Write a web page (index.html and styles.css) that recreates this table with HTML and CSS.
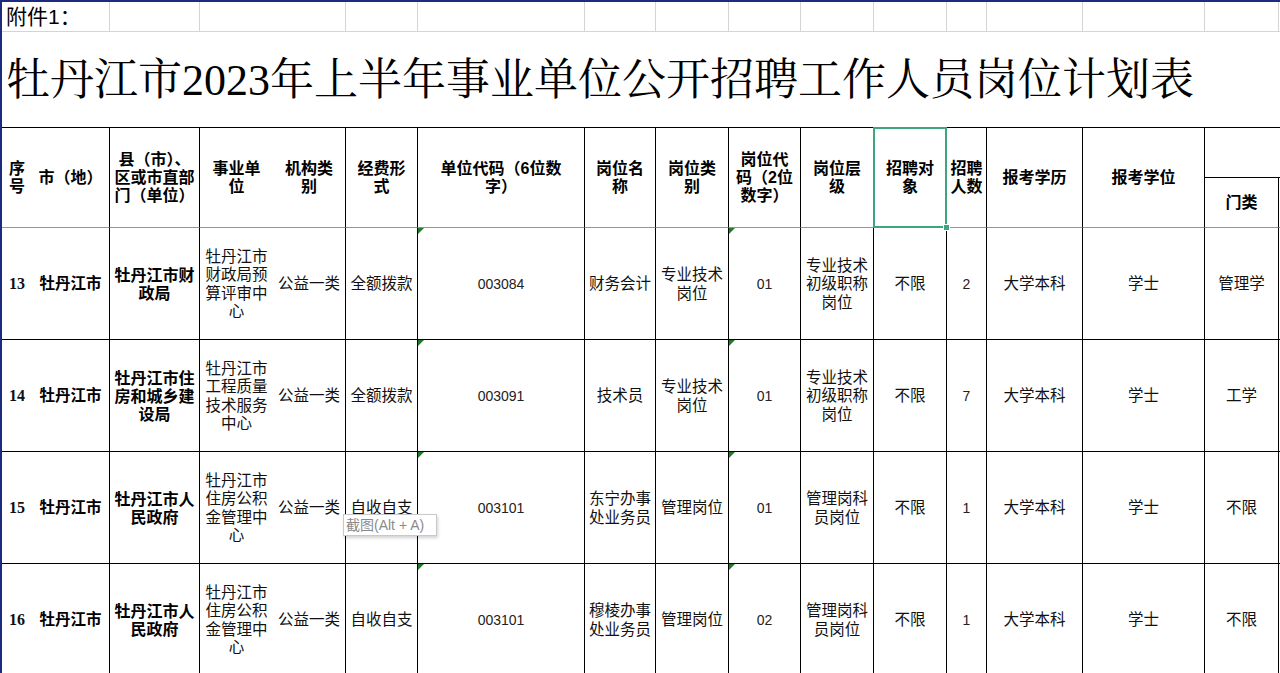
FILE: index.html
```html
<!DOCTYPE html>
<html lang="zh-CN">
<head>
<meta charset="utf-8">
<title>牡丹江市2023年上半年事业单位公开招聘工作人员岗位计划表</title>
<link rel="stylesheet" href="styles.css">
</head>
<body>
<div class="page">
  <div class="sheet">
    <div class="cell r1 lead">附件1：</div>
    <div class="cell r1"></div>
    <div class="cell r1 span2"></div>
    <div class="cell r1"></div>
    <div class="cell r1"></div>
    <div class="cell r1"></div>
    <div class="cell r1"></div>
    <div class="cell r1"></div>
    <div class="cell r1"></div>
    <div class="cell r1"></div>
    <div class="cell r1"></div>
    <div class="cell r1"></div>
    <div class="cell r1"></div>
    <div class="cell r1"></div>
    <div class="cell r1"></div>

    <div class="cell title">牡丹江市2023年上半年事业单位公开招聘工作人员岗位计划表</div>

    <div class="cell h nb">序<br>号</div>
    <div class="cell h">市（地）</div>
    <div class="cell h">县（市）、<br>区或市直部<br>门（单位）</div>
    <div class="cell h nb">事业单<br>位</div>
    <div class="cell h">机构类<br>别</div>
    <div class="cell h">经费形<br>式</div>
    <div class="cell h">单位代码（6位数<br>字）</div>
    <div class="cell h">岗位名<br>称</div>
    <div class="cell h">岗位类<br>别</div>
    <div class="cell h">岗位代<br>码（2位<br>数字）</div>
    <div class="cell h">岗位层<br>级</div>
    <div class="cell h sel">招聘对<br>象</div>
    <div class="cell h">招聘<br>人数</div>
    <div class="cell h">报考学历</div>
    <div class="cell h">报考学位</div>
    <div class="cell h top2"></div>
    <div class="cell h low">门类</div>
    <div class="cell h low"></div>

    <div class="cell d num nb">13</div>
    <div class="cell d b">牡丹江市</div>
    <div class="cell d b c3">牡丹江市财<br>政局</div>
    <div class="cell d nb">牡丹江市<br>财政局预<br>算评审中<br>心</div>
    <div class="cell d">公益一类</div>
    <div class="cell d">全额拨款</div>
    <div class="cell d code tri">003084</div>
    <div class="cell d">财务会计</div>
    <div class="cell d">专业技术<br>岗位</div>
    <div class="cell d code tri">01</div>
    <div class="cell d">专业技术<br>初级职称<br>岗位</div>
    <div class="cell d">不限</div>
    <div class="cell d code">2</div>
    <div class="cell d">大学本科</div>
    <div class="cell d">学士</div>
    <div class="cell d">管理学</div>
    <div class="cell d"></div>

    <div class="cell d num nb">14</div>
    <div class="cell d b">牡丹江市</div>
    <div class="cell d b c3">牡丹江市住<br>房和城乡建<br>设局</div>
    <div class="cell d nb">牡丹江市<br>工程质量<br>技术服务<br>中心</div>
    <div class="cell d">公益一类</div>
    <div class="cell d">全额拨款</div>
    <div class="cell d code tri">003091</div>
    <div class="cell d">技术员</div>
    <div class="cell d">专业技术<br>岗位</div>
    <div class="cell d code tri">01</div>
    <div class="cell d">专业技术<br>初级职称<br>岗位</div>
    <div class="cell d">不限</div>
    <div class="cell d code">7</div>
    <div class="cell d">大学本科</div>
    <div class="cell d">学士</div>
    <div class="cell d">工学</div>
    <div class="cell d"></div>

    <div class="cell d num nb">15</div>
    <div class="cell d b">牡丹江市</div>
    <div class="cell d b c3">牡丹江市人<br>民政府</div>
    <div class="cell d nb">牡丹江市<br>住房公积<br>金管理中<br>心</div>
    <div class="cell d">公益一类</div>
    <div class="cell d">自收自支</div>
    <div class="cell d code tri">003101</div>
    <div class="cell d">东宁办事<br>处业务员</div>
    <div class="cell d">管理岗位</div>
    <div class="cell d code tri">01</div>
    <div class="cell d">管理岗科<br>员岗位</div>
    <div class="cell d">不限</div>
    <div class="cell d code">1</div>
    <div class="cell d">大学本科</div>
    <div class="cell d">学士</div>
    <div class="cell d">不限</div>
    <div class="cell d"></div>

    <div class="cell d num nb">16</div>
    <div class="cell d b">牡丹江市</div>
    <div class="cell d b c3">牡丹江市人<br>民政府</div>
    <div class="cell d nb">牡丹江市<br>住房公积<br>金管理中<br>心</div>
    <div class="cell d">公益一类</div>
    <div class="cell d">自收自支</div>
    <div class="cell d code tri">003101</div>
    <div class="cell d">穆棱办事<br>处业务员</div>
    <div class="cell d">管理岗位</div>
    <div class="cell d code tri">02</div>
    <div class="cell d">管理岗科<br>员岗位</div>
    <div class="cell d">不限</div>
    <div class="cell d code">1</div>
    <div class="cell d">大学本科</div>
    <div class="cell d">学士</div>
    <div class="cell d">不限</div>
    <div class="cell d"></div>
  </div>
  <div class="tip">截图(Alt + A)</div>
</div>
</body>
</html>
```

FILE: styles.css
```css
html, body {
  margin: 0;
  padding: 0;
  background: #fff;
}

.page {
  position: relative;
  width: 1280px;
  height: 673px;
  overflow: hidden;
  box-sizing: border-box;
  border-top: 2px solid #1c2b7d;
  border-left: 2px solid #1c2b7d;
  background: #fff;
  color: #000;
  font-family: "Liberation Sans", "Noto Sans CJK SC", sans-serif;
}

.sheet {
  display: grid;
  grid-template-columns: 30px 78px 90px 73px 73px 72px 167px 71px 73px 72px 73px 73px 40px 96px 122px 74px 80px;
  grid-template-rows: 30px 96px 50px 50px 112px 112px 112px 112px;
  width: 1357px;
}

.cell {
  box-sizing: border-box;
  border-right: 1px solid #000;
  border-bottom: 1px solid #000;
  display: flex;
  align-items: center;
  justify-content: center;
  text-align: center;
  white-space: nowrap;
  overflow: visible;
}

.nb {
  border-right: none;
}

.r1 {
  border-right: 1px solid #d4d4d4;
  border-bottom: 1px solid #d4d4d4;
}

.span2 {
  grid-column: span 2;
}

.lead {
  grid-column: span 2;
  justify-content: flex-start;
  padding-left: 4px;
  font-size: 21px;
  line-height: 28px;
}

.title {
  grid-column: 1 / -1;
  border-right: none;
  justify-content: flex-start;
  padding: 3px 0 0 4px;
  font-family: "Liberation Serif", "Noto Serif CJK SC", "Noto Sans CJK SC", serif;
  font-size: 44px;
  line-height: 50px;
}

.h {
  grid-row: span 2;
  font-weight: 700;
  font-size: 16px;
  line-height: 18px;
  padding-top: 1px;
  border-bottom-color: #5cb592;
}

.h.top2 {
  grid-row: span 1;
  grid-column: span 2;
  border-bottom-color: #000;
}

.h.low {
  grid-row: span 1;
}

.sel {
  position: relative;
}

.sel::after {
  content: "";
  position: absolute;
  left: -1px;
  top: -1px;
  right: -1px;
  bottom: -1px;
  border: 2px solid #3fa57c;
}

.sel::before {
  content: "";
  position: absolute;
  right: -4px;
  bottom: -4px;
  width: 5px;
  height: 5px;
  background: #3fa57c;
  border: 1px solid #fff;
  z-index: 2;
}

.d {
  font-size: 15.5px;
  line-height: 18.5px;
  padding-top: 2px;
  color: #111;
}

.d.b {
  font-weight: 700;
  color: #000;
}

.d.c3 {
  font-size: 16px;
  line-height: 18px;
}

.d.num {
  font-family: "Liberation Serif", serif;
  font-weight: 700;
  font-size: 16px;
}

.d.code {
  font-family: "Liberation Sans", sans-serif;
  font-size: 14px;
  color: #222;
}

.tri {
  position: relative;
}

.tri::before {
  content: "";
  position: absolute;
  left: 0;
  top: 0;
  border-top: 6px solid #1f7a2c;
  border-right: 6px solid transparent;
}

.tip {
  position: absolute;
  left: 341px;
  top: 512px;
  width: 94px;
  height: 22px;
  box-sizing: border-box;
  padding-left: 2px;
  border: 1px solid #c9c9c9;
  background: #fff;
  box-shadow: 1px 2px 3px rgba(0, 0, 0, 0.18);
  font-family: "Liberation Sans", "Noto Sans CJK SC", sans-serif;
  font-size: 14px;
  line-height: 20px;
  color: #8a8a8a;
  white-space: nowrap;
}
```
